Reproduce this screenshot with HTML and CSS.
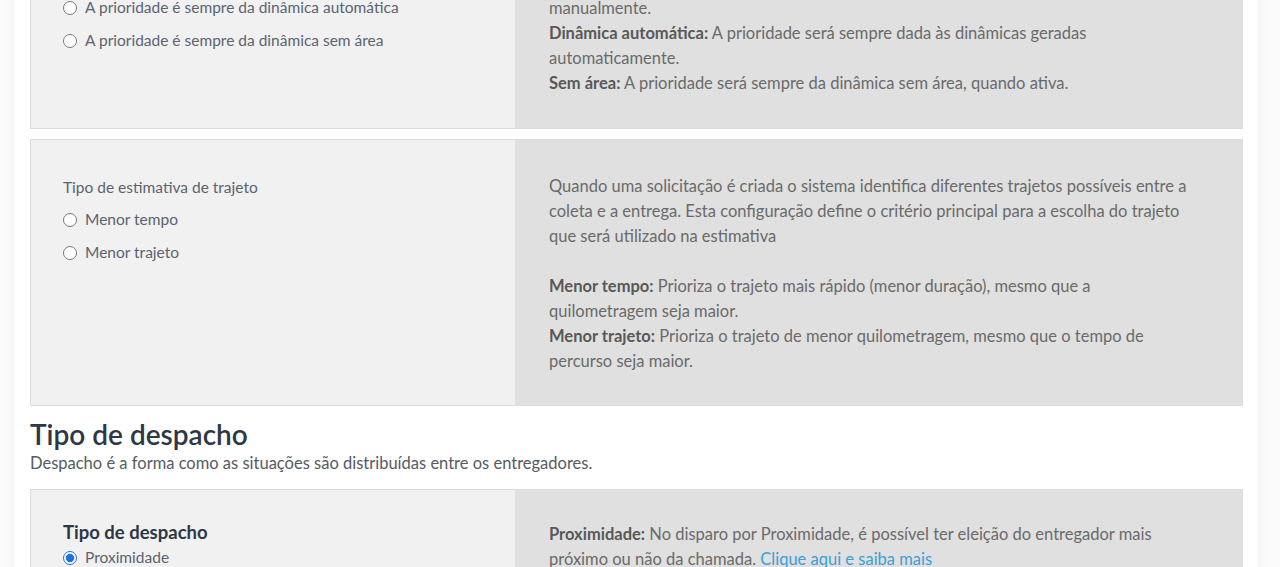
FILE: index.html
```html
<!DOCTYPE html>
<html lang="pt-BR">
<head>
<meta charset="utf-8">
<title>Configurações</title>
<link rel="stylesheet" href="styles.css">
</head>
<body>
<main class="page">
  <section class="card card--first">
    <div class="card__left">
      <p class="field-label">Prioridade de dinâmica</p>
      <label class="radio"><input type="radio" name="prio"> A prioridade é sempre da dinâmica manual</label>
      <label class="radio"><input type="radio" name="prio"> A prioridade é sempre da dinâmica automática</label>
      <label class="radio"><input type="radio" name="prio"> A prioridade é sempre da dinâmica sem área</label>
    </div>
    <div class="card__right">
      <p>Define qual dinâmica terá prioridade quando houver mais de uma ativa.</p>
      <p class="gap"></p>
      <p><b>Dinâmica manual:</b> A prioridade será sempre dada às dinâmicas criadas pelo operador manualmente.</p>
      <p><b>Dinâmica automática:</b> A prioridade será sempre dada às dinâmicas geradas automaticamente.</p>
      <p><b>Sem área:</b> A prioridade será sempre da dinâmica sem área, quando ativa.</p>
    </div>
  </section>

  <section class="card card--route">
    <div class="card__left">
      <p class="field-label">Tipo de estimativa de trajeto</p>
      <label class="radio"><input type="radio" name="traj"> Menor tempo</label>
      <label class="radio"><input type="radio" name="traj"> Menor trajeto</label>
    </div>
    <div class="card__right">
      <p>Quando uma solicitação é criada o sistema identifica diferentes trajetos possíveis entre a coleta e a entrega. Esta configuração define o critério principal para a escolha do trajeto que será utilizado na estimativa</p>
      <p class="gap"></p>
      <p><b>Menor tempo:</b> Prioriza o trajeto mais rápido (menor duração), mesmo que a quilometragem seja maior.</p>
      <p><b>Menor trajeto:</b> Prioriza o trajeto de menor quilometragem, mesmo que o tempo de percurso seja maior.</p>
    </div>
  </section>

  <header class="section-head">
    <h2>Tipo de despacho</h2>
    <p>Despacho é a forma como as situações são distribuídas entre os entregadores.</p>
  </header>

  <section class="card card--dispatch">
    <div class="card__left">
      <p class="field-title">Tipo de despacho</p>
      <label class="radio radio--tight"><input type="radio" name="desp" checked> Proximidade</label>
      <label class="radio radio--tight"><input type="radio" name="desp"> Ordem de chegada</label>
    </div>
    <div class="card__right">
      <p><b>Proximidade:</b> No disparo por Proximidade, é possível ter eleição do entregador mais próximo ou não da chamada. <a href="#">Clique aqui e saiba mais</a></p>
      <p class="gap"></p>
      <p><b>Ordem de chegada:</b> O disparo segue a ordem de chegada dos entregadores na fila.</p>
    </div>
  </section>
</main>
</body>
</html>
```

FILE: styles.css
```css
* { box-sizing: border-box; }

html, body {
  margin: 0;
  padding: 0;
  background: #fbfbfb;
  overflow: hidden;
}

body {
  font-family: Lato, "Noto Sans", sans-serif;
  font-size: 16px;
  color: #666;
}

p { margin: 0; }

.page {
  width: 1244px;
  margin: -113px 0 0 14px;
  padding: 0 15px 40px 16px;
  background: #fff;
  box-shadow: 0 0 10px rgba(0, 0, 0, 0.07);
  display: flex;
  flex-direction: column;
  gap: 10px;
}

.card {
  display: grid;
  grid-template-columns: 484px 1fr;
  border: 1px solid #dcdcdc;
}

.card__left {
  background: #f1f1f1;
  padding: 34px 20px 34px 32px;
  display: flex;
  flex-direction: column;
  color: #5b6370;
  font-size: 15.5px;
}

.card--first .card__left { padding-top: 42px; }

.card__right {
  background: #e0e0e0;
  padding: 33px 45px 32px 34px;
  line-height: 25px;
  font-size: 16.5px;
  color: #6a6a6a;
}

.card--route .card__left { padding-top: 35px; }
.card--route .card__right { padding-top: 34px; padding-bottom: 31px; }

.card--dispatch .card__left { padding-top: 28px; }
.card--dispatch .card__right { padding-top: 32px; }

.card__right b { color: #585858; font-weight: 700; }

.card__right a { color: #3a9fd6; text-decoration: none; }

.gap { height: 25px; }

.field-label {
  line-height: 25px;
  margin-bottom: 7px;
}

.field-title {
  font-size: 18.5px;
  font-weight: 700;
  color: #2e3746;
  line-height: 29px;
}

.radio {
  display: flex;
  align-items: center;
  gap: 8px;
  line-height: 25px;
  margin-bottom: 8px;
}

.radio--tight { margin-bottom: 2px; line-height: 21px; }

.radio input {
  margin: 0;
  width: 14px;
  height: 14px;
  accent-color: #1f6fe5;
}

.section-head {
  padding: 0 0 5px;
}

.section-head h2 {
  margin: 0;
  font-size: 28px;
  font-weight: 600;
  color: #2e3746;
  line-height: 36px;
}

.section-head p {
  color: #555b63;
  line-height: 22px;
  font-size: 16.5px;
}
```
